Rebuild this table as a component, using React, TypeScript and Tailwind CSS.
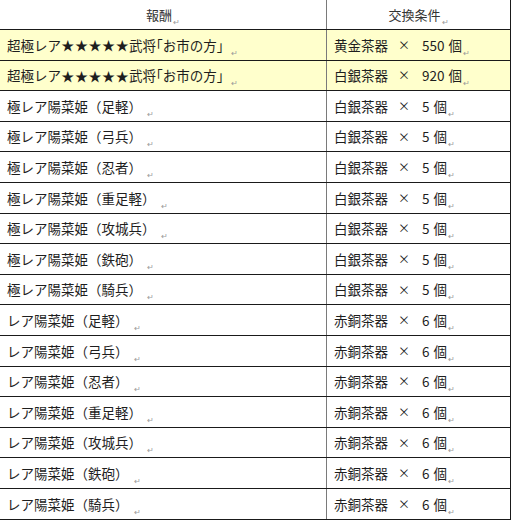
const rows: { reward: string; item: string; count: string; hl?: boolean }[] = [
  { reward: '超極レア★★★★★武将「お市の方」', item: '黄金茶器', count: '550', hl: true },
  { reward: '超極レア★★★★★武将「お市の方」', item: '白銀茶器', count: '920', hl: true },
  { reward: '極レア陽菜姫（足軽）', item: '白銀茶器', count: '5' },
  { reward: '極レア陽菜姫（弓兵）', item: '白銀茶器', count: '5' },
  { reward: '極レア陽菜姫（忍者）', item: '白銀茶器', count: '5' },
  { reward: '極レア陽菜姫（重足軽）', item: '白銀茶器', count: '5' },
  { reward: '極レア陽菜姫（攻城兵）', item: '白銀茶器', count: '5' },
  { reward: '極レア陽菜姫（鉄砲）', item: '白銀茶器', count: '5' },
  { reward: '極レア陽菜姫（騎兵）', item: '白銀茶器', count: '5' },
  { reward: 'レア陽菜姫（足軽）', item: '赤銅茶器', count: '6' },
  { reward: 'レア陽菜姫（弓兵）', item: '赤銅茶器', count: '6' },
  { reward: 'レア陽菜姫（忍者）', item: '赤銅茶器', count: '6' },
  { reward: 'レア陽菜姫（重足軽）', item: '赤銅茶器', count: '6' },
  { reward: 'レア陽菜姫（攻城兵）', item: '赤銅茶器', count: '6' },
  { reward: 'レア陽菜姫（鉄砲）', item: '赤銅茶器', count: '6' },
  { reward: 'レア陽菜姫（騎兵）', item: '赤銅茶器', count: '6' },
];

function Mark() {
  return <span className="ml-[1px] text-[8px] leading-none text-[#9a9a9a] self-end mb-[3px]">↵</span>;
}

// stars sit on full-width cells, opening bracket is half-width like in the source doc
function Reward({ text }: { text: string }) {
  return (
    <span className="flex items-center">
      {Array.from(text).map((c, i) =>
        c === '★' ? (
          <span key={i} className="inline-block w-[13.6px] text-center text-[13px]">★</span>
        ) : c === '「' ? (
          <span key={i} className="inline-block" style={{ fontFeatureSettings: '"halt"' }}>「</span>
        ) : (
          <span key={i}>{c}</span>
        )
      )}
    </span>
  );
}

export default function App() {
  return (
    <div
      className="w-[512px] h-[521px] bg-white overflow-hidden text-[#1e1e1e]"
      style={{ fontFamily: '"Noto Sans CJK JP", "Noto Sans", sans-serif' }}
    >
      <div className="w-[511px] border-r border-[#1a1a1a]">
        {/* header */}
        <div className="grid grid-cols-[327px_1fr] h-[30px] border-b border-[#1a1a1a]">
          <div className="flex items-center justify-center border-r border-[#7a7a7a] text-[13px] text-[#333]">
            報酬<Mark />
          </div>
          <div className="flex items-center justify-center text-[13px] text-[#333]">
            交換条件<Mark />
          </div>
        </div>
        {rows.map((r, i) => (
          <div
            key={i}
            className={`grid grid-cols-[327px_1fr] h-[30.6px] border-b border-[#1a1a1a] ${r.hl ? 'bg-[#ffffcc]' : 'bg-white'}`}
          >
            <div className="flex items-center pl-[7px] border-r border-[#7a7a7a] text-[13.5px] whitespace-nowrap">
              <Reward text={r.reward} />
              {!r.hl && <span className="w-[4px]" />}
              <Mark />
            </div>
            <div className="flex items-center pl-[7px] text-[13.5px] whitespace-nowrap">
              <span>{r.item}</span>
              <span className="ml-[10px] text-[12px]">×</span>
              <span className="ml-[12px]">{r.count}</span>
              <span className="ml-[4px]">個</span>
              <Mark />
            </div>
          </div>
        ))}
      </div>
    </div>
  );
}
